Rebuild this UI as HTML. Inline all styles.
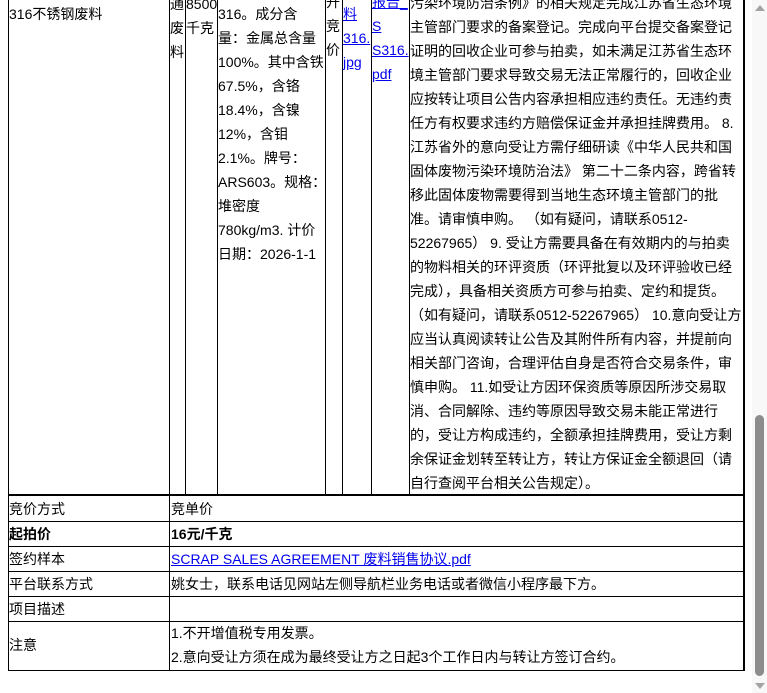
<!DOCTYPE html>
<html><head><meta charset="utf-8"><style>
*{margin:0;padding:0;box-sizing:border-box}
body{width:767px;height:693px;overflow:hidden;background:#fff;font-family:"Liberation Sans","Noto Sans CJK SC",sans-serif;font-size:14px;color:#000;position:relative}
.a{position:absolute;white-space:nowrap;line-height:24px}
.v{position:absolute;background:#000;width:1px}
.h{position:absolute;background:#000;height:1px}
a,.lk{color:#00e;text-decoration:underline}
</style></head><body>
<!-- vertical lines upper -->
<div class="v" style="left:8px;top:0;height:671px"></div>
<div class="v" style="left:169px;top:0;height:671px"></div>
<div class="v" style="left:185px;top:0;height:494px"></div>
<div class="v" style="left:217px;top:0;height:494px"></div>
<div class="v" style="left:325px;top:0;height:494px"></div>
<div class="v" style="left:342px;top:0;height:494px"></div>
<div class="v" style="left:371px;top:0;height:494px"></div>
<div class="v" style="left:409px;top:0;height:494px"></div>
<div class="v" style="left:743px;top:0;height:671px;width:2px"></div>
<!-- horizontals -->
<div class="h" style="left:8px;top:494px;width:737px;height:2px"></div>
<div class="h" style="left:8px;top:521px;width:737px"></div>
<div class="h" style="left:8px;top:546px;width:737px"></div>
<div class="h" style="left:8px;top:571px;width:737px"></div>
<div class="h" style="left:8px;top:596px;width:737px"></div>
<div class="h" style="left:8px;top:621px;width:737px"></div>
<div class="h" style="left:8px;top:670px;width:737px"></div>

<div class="a" style="left:9px;top:2px">316不锈钢废料</div>
<div class="a" style="left:170px;top:-8px">通<br>废<br>料</div>
<div class="a" style="left:186px;top:-8px">8500<br>千克</div>
<div class="a" style="left:218px;top:2px">316。成分含<br>量：金属总含量<br>100%。其中含铁<br>67.5%，含铬<br>18.4%，含镍<br>12%，含钼<br>2.1%。牌号：<br>ARS603。规格：<br>堆密度<br>780kg/m3. 计价<br>日期：2026-1-1</div>
<div class="a" style="left:326px;top:-10px">开<br>竞<br>价</div>
<div class="a lk" style="left:343px;top:2px">料<br>316.<br>jpg</div>
<div class="a lk" style="left:372px;top:-10px">报告_<br>S<br>S316.<br>pdf</div>
<div class="a" style="left:410px;top:-9px">污染环境防治条例》的相关规定完成江苏省生态环境<br>主管部门要求的备案登记。完成向平台提交备案登记<br>证明的回收企业可参与拍卖，如未满足江苏省生态环<br>境主管部门要求导致交易无法正常履行的，回收企业<br>应按转让项目公告内容承担相应违约责任。无违约责<br>任方有权要求违约方赔偿保证金并承担挂牌费用。 8.<br>江苏省外的意向受让方需仔细研读《中华人民共和国<br>固体废物污染环境防治法》 第二十二条内容，跨省转<br>移此固体废物需要得到当地生态环境主管部门的批<br>准。请审慎申购。 （如有疑问，请联系0512-<br>52267965） 9. 受让方需要具备在有效期内的与拍卖<br>的物料相关的环评资质（环评批复以及环评验收已经<br>完成），具备相关资质方可参与拍卖、定约和提货。<br>（如有疑问，请联系0512-52267965） 10.意向受让方<br>应当认真阅读转让公告及其附件所有内容，并提前向<br>相关部门咨询，合理评估自身是否符合交易条件，审<br>慎申购。 11.如受让方因环保资质等原因所涉交易取<br>消、合同解除、违约等原因导致交易未能正常进行<br>的，受让方构成违约，全额承担挂牌费用，受让方剩<br>余保证金划转至转让方，转让方保证金全额退回（请<br>自行查阅平台相关公告规定）。</div>

<div class="a" style="left:9px;top:497px">竞价方式</div>
<div class="a" style="left:171px;top:497px">竞单价</div>
<div class="a" style="left:9px;top:522px;font-weight:bold">起拍价</div>
<div class="a" style="left:171px;top:522px;font-weight:bold">16元/千克</div>
<div class="a" style="left:9px;top:547px">签约样本</div>
<div class="a lk" style="left:171px;top:547px">SCRAP SALES AGREEMENT 废料销售协议.pdf</div>
<div class="a" style="left:9px;top:572px">平台联系方式</div>
<div class="a" style="left:171px;top:572px">姚女士，联系电话见网站左侧导航栏业务电话或者微信小程序最下方。</div>
<div class="a" style="left:9px;top:597px">项目描述</div>
<div class="a" style="left:9px;top:633px">注意</div>
<div class="a" style="left:171px;top:621px">1.不开增值税专用发票。</div>
<div class="a" style="left:171px;top:645px">2.意向受让方须在成为最终受让方之日起3个工作日内与转让方签订合约。</div>

<!-- scrollbar -->
<div style="position:absolute;left:752px;top:0;width:15px;height:693px;background:#f8f8f8"></div>
<div style="position:absolute;left:755px;top:415px;width:9px;height:261px;background:#8c8c8c;border-radius:5px"></div>
<div style="position:absolute;left:755px;top:5px;width:0;height:0;border-left:5px solid transparent;border-right:5px solid transparent;border-bottom:6px solid #a3a3a3"></div>
<div style="position:absolute;left:755px;top:683px;width:0;height:0;border-left:5px solid transparent;border-right:5px solid transparent;border-top:6px solid #a3a3a3"></div>
</body></html>
